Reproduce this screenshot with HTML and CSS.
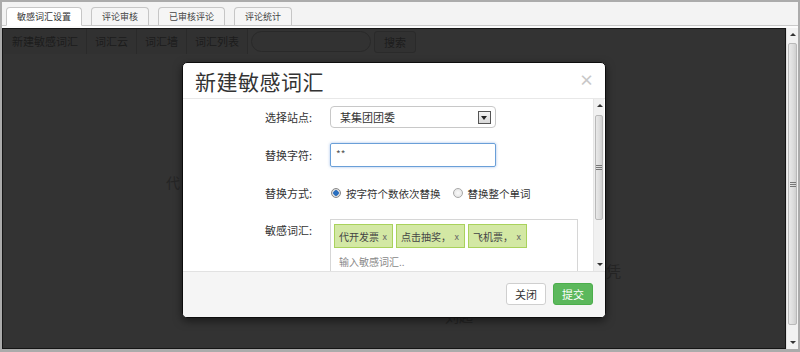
FILE: index.html
```html
<!DOCTYPE html>
<html>
<head>
    <meta charset="utf-8">
    <title>敏感词汇设置</title>
    <link rel="stylesheet" href="styles.css">
</head>
<body>
    <div class="window">
        <div class="tabbar">
            <div class="tab active">敏感词汇设置</div>
            <div class="tab">评论审核</div>
            <div class="tab">已审核评论</div>
            <div class="tab">评论统计</div>
        </div>
        <div class="main">
            <div class="content">
                <div class="toolbar">
                    <div class="tool">新建敏感词汇</div>
                    <div class="tool">词汇云</div>
                    <div class="tool">词汇墙</div>
                    <div class="tool">词汇列表</div>
                    <div class="search-box"></div>
                    <div class="search-btn">搜索</div>
                </div>
                <div class="cloud">
                    <span class="word w1">代</span>
                    <span class="word w2">文凭</span>
                    <span class="word w3">刘起</span>
                </div>
            </div>
            <div class="vscroll">
                <div class="arrow up"></div>
                <div class="track"><div class="thumb big"><span class="grip"></span></div></div>
                <div class="arrow down"></div>
            </div>
        </div>

        <div class="modal">
            <div class="modal-header">
                <div class="modal-title">新建敏感词汇</div>
                <div class="close">×</div>
            </div>
            <div class="modal-body">
                <div class="form">
                    <div class="row">
                        <div class="label">选择站点:</div>
                        <div class="select">
                            <span>某集团团委</span>
                            <span class="select-btn"></span>
                        </div>
                    </div>
                    <div class="row">
                        <div class="label">替换字符:</div>
                        <div class="input focus">**</div>
                    </div>
                    <div class="row">
                        <div class="label">替换方式:</div>
                        <div class="radios">
                            <span class="radio checked"></span>
                            <span class="radio-text">按字符个数依次替换</span>
                            <span class="radio"></span>
                            <span class="radio-text">替换整个单词</span>
                        </div>
                    </div>
                    <div class="row top">
                        <div class="label">敏感词汇:</div>
                        <div class="tags-box">
                            <div class="tags">
                                <span class="tag t1">代开发票<i>x</i></span>
                                <span class="tag t2">点击抽奖，<i>x</i></span>
                                <span class="tag t3">飞机票，<i>x</i></span>
                            </div>
                            <div class="tag-input">输入敏感词汇..</div>
                        </div>
                    </div>
                </div>
                <div class="vscroll small">
                    <div class="arrow up"></div>
                    <div class="track"><div class="thumb"><span class="grip"></span></div></div>
                    <div class="arrow down"></div>
                </div>
            </div>
            <div class="modal-footer">
                <div class="btn">关闭</div>
                <div class="btn primary">提交</div>
            </div>
        </div>
    </div>
</body>
</html>
```

FILE: styles.css
```css
* {
    box-sizing: border-box;
}

body {
    margin: 0;
    padding: 0;
    overflow: hidden;
    background-color: #ababab;
    font-family: "Noto Sans CJK SC", "Liberation Sans", sans-serif;
    font-size: 11px;
    color: #333;
}

.window {
    position: relative;
    width: 800px;
    height: 352px;
    padding: 2px 2px 3px 2px;
    background-color: #ababab;
    display: flex;
    flex-direction: column;
}

/* tabs */
.tabbar {
    height: 24px;
    background-color: #f3f3f3;
    border-bottom: 1px solid #c9c9c9;
    display: flex;
    align-items: flex-end;
    gap: 9px;
    padding-left: 4px;
}

.tab {
    height: 19px;
    margin-bottom: -1px;
    padding: 0 10px;
    font-size: 9px;
    line-height: 17px;
    color: #444;
    background-color: #f5f5f5;
    border: 1px solid #c6c6c6;
    border-bottom-color: #c9c9c9;
    border-radius: 4px 4px 0 0;
}

.tab.active {
    background-color: #fff;
    border-bottom-color: #fff;
    color: #333;
}

/* page */
.main {
    flex: 1;
    display: flex;
    border-top: 2px solid #fbfbfb;
    min-height: 0;
}

.content {
    flex: 1;
    background-color: #333;
    border: 1px solid #151515;
    display: flex;
    flex-direction: column;
}

.toolbar {
    display: flex;
    align-items: center;
    height: 25px;
    padding-left: 1px;
}

.tool {
    height: 25px;
    padding: 0 8px;
    font-size: 11px;
    line-height: 25px;
    color: #1c1c1c;
    background-color: #313131;
    border-right: 1px solid #2a2a2a;
}

.search-box {
    width: 120px;
    height: 21px;
    margin-left: 3px;
    border: 1px solid #292929;
    border-radius: 11px;
    background-color: #323232;
}

.search-btn {
    height: 22px;
    margin-left: 3px;
    padding: 0 9px;
    font-size: 11px;
    line-height: 20px;
    color: #1c1c1c;
    border: 1px solid #2a2a2a;
    border-radius: 3px;
    background-color: #313131;
}

.cloud {
    position: relative;
    flex: 1;
}

.word {
    position: absolute;
    color: #252525;
    font-size: 14px;
}

.w1 { left: 163px; top: 118px; }
.w2 { left: 588px; top: 206px; font-size: 15px; }
.w3 { left: 442px; top: 252px; }

/* scrollbars */
.vscroll {
    width: 12px;
    display: flex;
    flex-direction: column;
    background-color: #f1f1f1;
    border-left: 1px solid #e0e0e0;
}

.arrow {
    height: 13px;
    position: relative;
}

.arrow::after {
    content: "";
    position: absolute;
    left: 3px;
    width: 0;
    height: 0;
    border-left: 3px solid transparent;
    border-right: 3px solid transparent;
}

.arrow.up::after {
    top: 5px;
    border-bottom: 3px solid #333;
}

.arrow.down::after {
    top: 5px;
    border-top: 3px solid #333;
}

.track {
    flex: 1;
    padding: 2px 0;
}

.thumb {
    height: 105px;
    margin: 0 1px;
    border: 1px solid #b9b9b9;
    border-radius: 2px;
    background: linear-gradient(to right, #e9e9e9, #dcdcdc 60%, #cfcfcf);
    display: flex;
    align-items: center;
    justify-content: center;
}

.thumb.big {
    height: 282px;
}

.grip {
    width: 6px;
    height: 5px;
    border-top: 1px solid #777;
    border-bottom: 1px solid #777;
    position: relative;
}

.grip::after {
    content: "";
    position: absolute;
    left: 0;
    right: 0;
    top: 1px;
    border-top: 1px solid #777;
}

/* modal */
.modal {
    position: absolute;
    left: 182px;
    top: 62px;
    width: 424px;
    height: 256px;
    background-color: #fff;
    border: 1px solid #0d0d0d;
    border-radius: 5px;
    box-shadow: 0 3px 9px rgba(0, 0, 0, 0.5);
    display: flex;
    flex-direction: column;
    overflow: hidden;
}

.modal-header {
    height: 36px;
    display: flex;
    align-items: center;
    justify-content: space-between;
    padding: 0 11px 0 12px;
    border-bottom: 1px solid #e8e8e8;
}

.modal-title {
    font-size: 21px;
    color: #333;
    letter-spacing: 0.5px;
}

.close {
    font-size: 15px;
    font-weight: bold;
    color: #c8c8c8;
    margin-top: -2px;
}

.modal-body {
    height: 172px;
    display: flex;
    overflow: hidden;
}

.modal-body .vscroll {
    width: 11px;
    margin-right: 1px;
    border-left: 1px solid #e6e6e6;
}

.modal-body .track {
    padding: 3px 0 35px;
}

.form {
    flex: 1;
    padding-top: 7px;
    overflow: hidden;
}

.row {
    display: flex;
    align-items: center;
    gap: 18px;
    margin-bottom: 15px;
}

.row.top {
    align-items: flex-start;
}

.label {
    width: 129px;
    text-align: right;
    line-height: 22px;
    font-size: 11px;
    color: #333;
}

.select {
    width: 166px;
    height: 22px;
    border: 1px solid #c8c8c8;
    border-radius: 4px;
    display: flex;
    align-items: center;
    justify-content: space-between;
    padding: 0 4px 0 9px;
}

.select-btn {
    width: 13px;
    height: 13px;
    border: 1px solid #555;
    background: linear-gradient(#f4f4f4, #d8d8d8);
    position: relative;
}

.select-btn::after {
    content: "";
    position: absolute;
    left: 2px;
    top: 4px;
    border-left: 3.5px solid transparent;
    border-right: 3.5px solid transparent;
    border-top: 4px solid #222;
}

.input {
    width: 166px;
    height: 24px;
    padding: 0 5px;
    line-height: 20px;
    font-size: 10px;
    color: #555;
    border: 1px solid #6a9fd8;
    border-radius: 2px;
    box-shadow: 0 0 3px rgba(102, 150, 220, 0.6);
}

.radios {
    display: flex;
    align-items: center;
    height: 22px;
}

.radio {
    width: 10px;
    height: 10px;
    border: 1px solid #a8a8a8;
    border-radius: 50%;
    background: radial-gradient(#fafafa, #e0e0e0);
    margin-left: 1px;
}

.radio.checked {
    background: radial-gradient(circle, #2a6fbf 0, #2a6fbf 2.5px, #dcdcdc 3px);
    border-color: #888;
}

.radio-text {
    margin-left: 5px;
    margin-right: 11px;
    font-size: 10.5px;
    color: #333;
}

.tags-box {
    width: 248px;
    height: 70px;
    border: 1px solid #d6d6d6;
    padding: 4px 3px;
}

.tags {
    display: flex;
    gap: 3px;
}

.tag {
    flex-shrink: 0;
    white-space: nowrap;
    height: 24px;
    padding: 0 5px 0 4px;
    display: flex;
    align-items: center;
    justify-content: space-between;
    font-size: 10px;
    color: #444;
    background-color: #d3e8a4;
    border: 1px solid #a9d25c;
}

.tag.t1 { width: 59px; }
.tag.t2 { width: 69px; }
.tag.t3 { width: 59px; }

.tag i {
    font-style: normal;
    font-size: 9px;
    color: #666;
}

.tag-input {
    padding: 6px 0 0 5px;
    font-size: 10px;
    color: #888;
}

.modal-footer {
    flex: 1;
    background-color: #f5f5f5;
    border-top: 1px solid #e2e2e2;
    display: flex;
    justify-content: flex-end;
    align-items: center;
    gap: 7px;
    padding: 0 12px 2px 0;
}

.btn {
    width: 40px;
    height: 22px;
    text-align: center;
    line-height: 20px;
    font-size: 11px;
    color: #333;
    background-color: #fff;
    border: 1px solid #cfcfcf;
    border-radius: 3px;
}

.btn.primary {
    color: #fff;
    background-color: #5cb85c;
    border-color: #4cae4c;
}
```
